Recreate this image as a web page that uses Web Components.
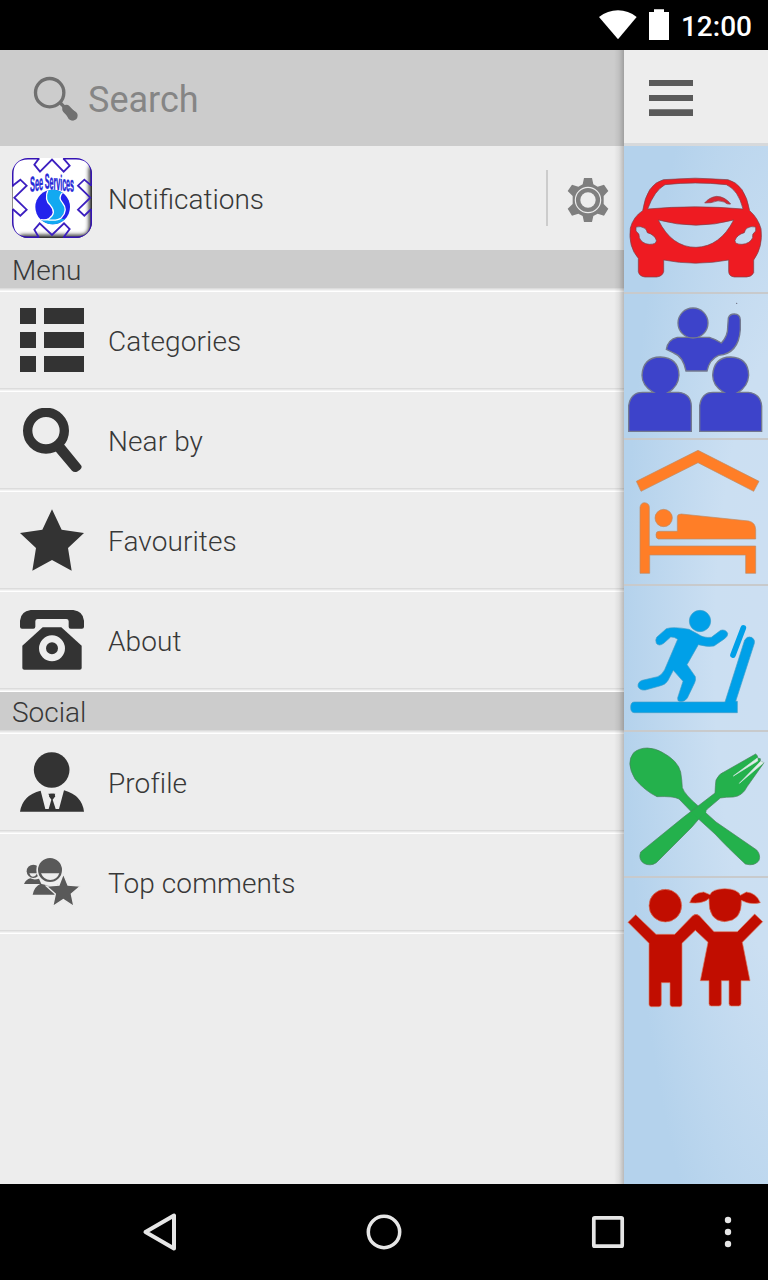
<!DOCTYPE html>
<html lang="en">
<head>
<meta charset="utf-8">
<title>See Services</title>
<style>
    html, body{
        margin: 0;
        background: #000;
    }
    body{
        width: 768px;
        height: 1280px;
        overflow: hidden;
        font-family: Roboto, sans-serif;
    }
</style>
</head>
<body>
<app-screen></app-screen>

<script>
const ICONS = {
    wifi: ['204 27 120 96', 40, 32, `<path fill="#fff" d="M207 51Q233 31 264 31T320 51L264 118Z"/>`],
    battery: ['357 27 60 96', 20, 32, `<path fill="#fff" d="M357 36H372V28H402V36H417V120H357Z"/>`],
    search: ['90 72 150 150', 50, 50, `
        <circle cx="149" cy="125" r="42.500" fill="none" stroke="#707070" stroke-width="10"/>
        <path d="M178 153L198 173" stroke="#707070" stroke-width="10"/>
        <path d="M199 174L220 196" stroke="#707070" stroke-width="25" stroke-linecap="round"/>
        <path d="M187 169L196 162L228 183Q236 190 230 198L222 207Q213 211 206 204Z" fill="#707070"/>`],
    gear: ['108 534 132 132', 44, 44, `
        <path fill="#7f7f7f" d="M162 534H186L190 553L203 560L222 554L235 573L221 588V612L235 626L222 647L203 641L190 648L186 666H162L158 648L145 641L126 647L113 626L128 612V588L113 573L126 554L145 560L158 553Z"/>
        <circle cx="174" cy="600" r="38" fill="#7f7f7f" stroke="#ededed" stroke-width="3.500"/>
        <circle cx="174" cy="600" r="23" fill="#ededed"/>`],
    burger: ['357 240 132 108', 44, 36, `<path fill="#5a5a5a" d="M357 240H489V258H357ZM357 285H489V303H357ZM357 328H489V348H357Z"/>`],
    logo: ['36 324 240 240', 80, 80, `
        <defs>
            <clipPath id="r"><rect x="36" y="324" width="240" height="240" rx="48"/></clipPath>
            <clipPath id="b"><circle cx="158" cy="471" r="52"/></clipPath>
            <filter id="s" x="-50%" y="-20%" width="200%" height="140%" filterUnits="objectBoundingBox"><feGaussianBlur stdDeviation="7"/></filter>
        </defs>
        <g clip-path="url(#r)">
            <rect x="36" y="324" width="240" height="240" fill="#fff"/>
            <path d="M280 350V530Q280 568 240 568H60" fill="none" stroke="#111" stroke-width="24" filter="url(#s)"/>
            <path d="M32 340V550H36V340" stroke="#333" stroke-width="8" filter="url(#s)"/>
            <g fill="none" stroke="#3c1fc0" stroke-width="5.500">
                <path d="M117 325L103 344L120 365L156 329L191 365L209 347L190 325"/>
                <path d="M117 563L103 539L119 520L156 555L192 520L209 537L190 563"/>
                <path d="M38 407L61 389L80 407L43 443L80 479L61 497L38 477"/>
                <path d="M274 407L253 389L234 407L271 443L234 479L253 497L274 477"/>
                <path stroke="#3514b4" stroke-width="7" d="M37 410V372Q37 325 84 325H118M190 325H228Q275 325 275 372V408M275 478V516Q275 563 228 563H190M117 563H84Q37 563 37 516V477"/>
            </g>
        </g>
        <circle cx="158" cy="471" r="52" fill="#2323ec"/>
        <g clip-path="url(#b)">
            <path d="M146 415Q132 450 151 466Q171 490 147 506Q133 514 112 506V530H210V502Q190 511 180 504Q205 480 191 462Q174 445 188 427L180 410Z" fill="#12a9f1"/>
            <path d="M144 419Q132 449 151 466Q171 489 147 506Q133 514 109 505M188 427Q173 443 187 458Q206 481 184 503Q172 514 138 509" fill="none" stroke="#fff" stroke-width="4"/>
        </g>
        <g font-family="Liberation Sans, sans-serif" font-weight="700" fill="#2528d8" stroke="#2528d8" stroke-width="1.500">
            <text transform="matrix(.345 -.05 0 1 90 425)" font-size="64">See</text>
            <text transform="matrix(.335 .04 0 1 134 415)" font-size="64">Services</text>
        </g>`],
    list: ['60 36 192 192', 64, 64, `<path d="M60 36H108V84H60ZM132 36H252V84H132ZM60 108H108V156H60ZM132 108H252V156H132ZM60 180H108V228H60ZM132 180H252V228H132Z"/>`],
    lens: ['60 336 192 192', 64, 64, `
        <circle cx="138" cy="404" r="55" fill="none" stroke="#333" stroke-width="28"/>
        <path d="M166 465L191 444L243 508Q248 514 240 521L231 527Q222 530 216 524Z"/>`],
    star: ['60 36 192 192', 64, 64, `<path d="M156 40L185 101L252 111L204 156L215 224L156 192L97 224L108 156L60 111L127 101Z"/>`],
    phone: ['60 336 192 192', 64, 64, `
        <path d="M60 392V374Q62 346 92 342H220Q250 346 252 374V392Q252 398 246 398H212Q206 398 206 392V376Q206 369 199 369H113Q106 369 106 376V392Q106 398 100 398H66Q60 398 60 392Z"/>
        <path d="M128 394H184L245 449V516Q245 521 239 521H73Q67 521 67 516V449Z"/>
        <circle cx="156" cy="457" r="28.500" fill="#333" stroke="#ededed" stroke-width="21"/>`],
    profile: ['60 180 192 192', 64, 64, `
        <circle cx="155" cy="240" r="53.500"/>
        <path d="M60 365Q68 315 122 302L136 357H146L154 329L147 319L151 311H162L166 319L158 329L167 357H177L192 301Q246 316 252 365Z"/>
        <path d="M145 311H166L160 323H151Z"/>`],
    top: ['60 480 192 192', 64, 64, `
        <g fill="#595959">
            <circle cx="100" cy="544" r="20"/>
            <path d="M88 550H112Q106 561 98 560Q91 559 88 550Z" fill="#ededed"/>
            <path d="M72 582Q78 568 91 565Q103 571 117 566L124 582Z"/>
            <path d="M98 614Q103 589 122 581Q148 590 174 584V614Z"/>
            <circle cx="150" cy="540" r="38.500" stroke="#ededed" stroke-width="5"/>
            <path d="M123 550H178Q171 570 151 570Q131 570 123 550Z" fill="#ededed"/>
            <path d="M190 551L204 585L242 588L214 612L222 650L190 629L158 650L166 612L139 588L177 585Z" stroke="#ededed" stroke-width="4"/>
        </g>`],
    back: ['140 1208 40 48', 40, 48, `<path d="M145.500 1232L174 1215.500V1248.500Z" fill="none" stroke="#e6e6e6" stroke-width="4" stroke-linejoin="round"/>`],
    home: ['360 1208 48 48', 48, 48, `<circle cx="384" cy="1232" r="15.700" fill="none" stroke="#e6e6e6" stroke-width="3.500"/>`],
    recent: ['584 1208 48 48', 48, 48, `<rect x="593.800" y="1217.800" width="28.400" height="28.400" rx="1" fill="none" stroke="#e6e6e6" stroke-width="3.700"/>`],
    more: ['722 1208 12 48', 12, 48, `<g fill="#e6e6e6"><circle cx="728" cy="1220" r="3.200"/><circle cx="728" cy="1232" r="3.200"/><circle cx="728" cy="1244" r="3.200"/></g>`],
    car: ['282 438 432 438', 144, 146, `
        <path fill="#ee1b22" fill-rule="evenodd" stroke="#7a4048" stroke-width="2" d="M338 632Q350 552 400 539Q495 530 594 539Q645 552 659 632Q684 654 693 686Q700 740 671 780V818Q666 830 650 831H613Q597 829 596 815V780Q495 799 401 780V815Q397 829 380 831H345Q328 829 325 815V775Q294 740 301 684Q310 650 338 632Z
        M353 627Q495 614 639 627Q625 570 589 554Q495 544 405 554Q373 572 353 627Z
        M385 660Q425 742 498 742Q570 740 611 660Q498 691 385 660Z
        M318 681Q331 677 345 685Q351 692 352 698Q374 704 379 721Q380 733 358 733Q335 731 328 713Q330 702 318 693Z
        M677 681Q663 677 650 685Q644 692 643 698Q621 704 615 721Q614 733 636 733Q660 731 668 713Q665 702 677 693Z"/>
        <path d="M524 609Q537 592 560 589Q585 590 602 612Q590 614 583 606Q565 598 543 608Z" fill="#d82732" stroke="#884650" stroke-width="2"/>`],
    people: ['42 24 432 432', 144, 144, `
        <g fill="#3d43ca" stroke="#73798f" stroke-width="4">
            <path d="M169 190Q174 160 202 154H298Q318 160 334 171Q354 150 353 124L355 96Q359 84 373 84Q390 84 391 102V130Q386 203 326 208Q298 220 291 255H228Q219 211 191 201Z"/>
            <circle cx="249" cy="111" r="45"/>
            <path d="M56 436V359Q62 319 98 319H130Q96 300 96 268Q99 214 151 213Q206 215 207 268Q205 302 175 319H206Q243 323 244 360V436Z"/>
            <path d="M269 436V359Q275 319 309 319H341Q308 300 308 268Q311 214 362 213Q415 215 416 268Q414 302 384 319H415Q452 323 455 360V436Z"/>
        </g>
        <circle cx="380" cy="52" r="2" fill="#667"/>`],
    bed: ['42 12 432 432', 144, 144, `
        <g fill="#ff7e27" stroke="#b98c6a" stroke-width="2">
            <path d="M79 136L264 43L447 136L431 166L264 80L93 166Z"/>
            <path d="M90 412V214Q92 200 104 200Q118 202 118 214V330H437V412H407V357H119V412Z"/>
            <circle cx="161" cy="246" r="26"/>
            <path d="M145 309Q137 307 138 296Q138 286 147 286H202V242Q202 234 214 234L416 255Q437 260 437 281V309Z"/>
        </g>`],
    gym: ['42 6 432 432', 144, 144, `
        <g fill="#00a0e8" stroke="#3f9fc8" stroke-width="2">
            <path d="M73 354H345L404 168Q412 155 425 160Q436 167 433 178L377 352H382V386H73Q62 386 62 370Q62 354 73 354Z"/>
            <circle cx="270" cy="111" r="32"/>
            <path d="M140 160L169 134Q190 127 237 136L265 151Q278 162 304 160L332 139Q346 135 353 148Q354 157 344 164L312 186Q293 190 265 182L231 242L256 278Q258 288 254 296L232 342Q220 358 204 350Q201 342 206 332L219 292L190 259L173 291Q165 303 149 306L106 318Q89 320 84 307Q83 294 97 289L143 278Q155 274 164 257L203 166Q193 158 182 159L161 178Q147 188 139 178Q135 168 140 160Z"/>
            <path d="M400 132L369 213" fill="none" stroke="#00a0e8" stroke-width="17" stroke-linecap="round"/>
        </g>`],
    food: ['42 6 432 432', 144, 144, `
        <g fill="#24b14c" stroke="#4a805e" stroke-width="2">
            <path d="M71 68Q88 54 112 54Q136 55 155 66Q204 92 212 126Q216 150 217 173Q224 194 267 230L318 276L440 360Q453 374 447 391Q435 410 406 402Q350 350 315 312L260 262L207 207Q190 198 141 200Q105 183 75 147Q46 98 71 68Z"/>
            <path d="M437 72L442 77L443 84L451 86V94L462 98L412 169Q397 199 370 201Q348 201 331 204L292 237L246 291L139 398Q121 410 101 400Q84 387 92 366L220 262L315 189Q316 164 318 150Q328 130 342 126Z"/>
            <path d="M266 229L290 245L266 267L244 247Z" stroke="none"/>
        </g>
        <path d="M442 84L370 138L443 93ZM452 94L388 160L461 98Z" fill="#e3eee9" stroke="#d4e5e7" stroke-width="2"/>`],
    kids: ['42 12 432 432', 144, 144, `
        <g fill="#c10d00" stroke="#d9795f" stroke-width="2">
            <circle cx="166" cy="95" r="49"/>
            <path d="M54 145L77 122L138 181H194L248 125Q258 117 268 125L312 173H382L434 120L458 143L397 205L420 320H393V389Q393 396 386 396H364Q357 396 357 389V320H334V389Q334 396 327 396H304Q297 396 297 389V320H271L294 205L256 169L216 208V391Q216 398 209 398H187Q180 398 180 391V326H154V391Q154 398 147 398H124Q117 398 117 391V208Z"/>
            <path d="M239 86Q248 56 281 54L300 62Q306 45 344 44Q382 44 391 64L409 54Q439 57 451 86Q421 94 394 79Q397 141 344 143Q294 141 297 74Q276 91 239 86Z"/>
        </g>`]
};

class AppIcon extends HTMLElement {
    constructor(){
        super();
        this.attachShadow({mode: "open"});
    }

    connectedCallback(){
        const [box, width, height, shapes] = ICONS[this.getAttribute('name')];
        this.shadowRoot.innerHTML = `
        <style>
            :host{
                display: block;
                flex: none;
            }
            svg{
                display: block;
                fill: #333;
            }
        </style>
        <svg viewBox="${box}" width="${width}" height="${height}">${shapes}</svg>
        `;
    }
}
customElements.define('app-icon', AppIcon);

class StatusBar extends HTMLElement {
    constructor(){
        super();
        this.attachShadow({mode: "open"}).innerHTML = `
        <style>
            :host{
                display: flex;
                justify-content: flex-end;
                box-sizing: border-box;
                height: 50px;
                padding: 9px 16px 0 0;
                background: #000;
                color: #fff;
                font-size: 28px;
                font-weight: 500;
                line-height: 36px;
            }
            .battery{
                margin: 0 12px 0 11px;
            }
        </style>
        <app-icon name="wifi"></app-icon>
        <app-icon name="battery" class="battery"></app-icon>
        <slot></slot>
        `;
    }
}
customElements.define('status-bar', StatusBar);

class SearchBox extends HTMLElement {
    constructor(){
        super();
        this.attachShadow({mode: "open"}).innerHTML = `
        <style>
            :host{
                display: flex;
                align-items: center;
                box-sizing: border-box;
                height: 96px;
                padding: 3px 0 0 30px;
                gap: 8px;
                background: #ccc;
                color: #858585;
                font-size: 36px;
                line-height: 42px;
                letter-spacing: 0;
            }
        </style>
        <app-icon name="search"></app-icon>
        <slot></slot>
        `;
    }
}
customElements.define('search-box', SearchBox);

class NoticeRow extends HTMLElement {
    constructor(){
        super();
        this.attachShadow({mode: "open"}).innerHTML = `
        <style>
            :host{
                display: flex;
                align-items: center;
                box-sizing: border-box;
                height: 104px;
                padding: 0 14px 0 12px;
                letter-spacing: 0;
            }
            .label{
                flex: 1;
                padding: 4px 0 0 16px;
            }
            .line{
                width: 2px;
                height: 56px;
                margin-right: 18px;
                background: #ccc;
            }
            .gear{
                margin-top: 4px;
            }
        </style>
        <app-icon name="logo"></app-icon>
        <span class="label"><slot></slot></span>
        <span class="line"></span>
        <app-icon name="gear" class="gear"></app-icon>
        `;
    }
}
customElements.define('notice-row', NoticeRow);

const divider = `
            :host::after{
                content: "";
                display: block;
                height: 4px;
                background: linear-gradient(#dcdcdc 0 1px, #e8e8e8 1px 2px, #f3f3f3 2px 3px, #fff 3px);
            }`;

class MenuHeader extends HTMLElement {
    constructor(){
        super();
        this.attachShadow({mode: "open"}).innerHTML = `
        <style>
            :host{
                display: block;
                letter-spacing: 0;
            }
            ${divider}
            div{
                height: 38px;
                padding-left: 12px;
                line-height: 41px;
                background: #ccc;
            }
        </style>
        <div><slot></slot></div>
        `;
    }
}
customElements.define('menu-header', MenuHeader);

class MenuItem extends HTMLElement {
    constructor(){
        super();
        this.attachShadow({mode: "open"});
    }

    connectedCallback(){
        this.shadowRoot.innerHTML = `
        <style>
            :host{
                display: block;
            }
            ${divider}
            div{
                display: flex;
                align-items: center;
                height: 96px;
                padding-left: 20px;
                gap: 24px;
            }
            span{
                padding-top: 4px;
            }
        </style>
        <div>
            <app-icon name="${this.getAttribute('icon')}"></app-icon>
            <span><slot></slot></span>
        </div>
        `;
    }
}
customElements.define('menu-item', MenuItem);

class SideDrawer extends HTMLElement {
    constructor(){
        super();
        this.attachShadow({mode: "open"}).innerHTML = `
        <style>
            :host{
                display: block;
                position: relative;
                width: 624px;
                background: #ededed;
                color: #383838;
                font-size: 28px;
                font-weight: 300;
                line-height: 34px;
                letter-spacing: .1px;
            }
            .shade{
                position: absolute;
                top: 0;
                right: 0;
                bottom: 0;
                width: 10px;
                background: linear-gradient(to right, rgba(0,0,0,0), rgba(0,0,0,.06) 50%, rgba(0,0,0,.22));
            }
        </style>
        <slot></slot>
        <div class="shade"></div>
        `;
    }
}
customElements.define('side-drawer', SideDrawer);

class CategoryStrip extends HTMLElement {
    constructor(){
        super();
        this.attachShadow({mode: "open"}).innerHTML = `
        <style>
            :host{
                display: flex;
                flex-direction: column;
                width: 144px;
            }
            header{
                box-sizing: border-box;
                height: 96px;
                padding: 30px 0 0 25px;
                border-bottom: 3px solid #d7d9db;
                background: #ededed;
            }
            section{
                flex: 1;
                background: radial-gradient(ellipse 165px 700px at 165px 510px, #cddff2 0, #cbdff2 45%, #b4d2ec 100%);
            }
            ::slotted(app-icon){
                border-bottom: 2px solid #c8cacc;
            }
            ::slotted(app-icon:last-child){
                border: 0;
            }
        </style>
        <header><app-icon name="burger"></app-icon></header>
        <section><slot></slot></section>
        `;
    }
}
customElements.define('category-strip', CategoryStrip);

class NavBar extends HTMLElement {
    constructor(){
        super();
        this.attachShadow({mode: "open"}).innerHTML = `
        <style>
            :host{
                display: flex;
                align-items: center;
                box-sizing: border-box;
                height: 96px;
                padding: 0 34px 0 140px;
                background: #000;
            }
            .home{
                margin: 0 176px 0 180px;
            }
            .more{
                margin-left: auto;
            }
        </style>
        <app-icon name="back"></app-icon>
        <app-icon name="home" class="home"></app-icon>
        <app-icon name="recent"></app-icon>
        <app-icon name="more" class="more"></app-icon>
        `;
    }
}
customElements.define('nav-bar', NavBar);

class AppScreen extends HTMLElement {
    constructor(){
        super();
        this.attachShadow({mode: "open"}).innerHTML = `
        <style>
            :host{
                display: flex;
                flex-direction: column;
                width: 768px;
                height: 1280px;
            }
            main{
                display: flex;
                flex: 1;
            }
            search-box{
                font-weight: 400;
            }
        </style>
        <status-bar>12:00</status-bar>
        <main>
            <side-drawer>
                <search-box>Search</search-box>
                <notice-row>Notifications</notice-row>
                <menu-header>Menu</menu-header>
                <menu-item icon="list">Categories</menu-item>
                <menu-item icon="lens">Near by</menu-item>
                <menu-item icon="star">Favourites</menu-item>
                <menu-item icon="phone">About</menu-item>
                <menu-header>Social</menu-header>
                <menu-item icon="profile">Profile</menu-item>
                <menu-item icon="top">Top comments</menu-item>
            </side-drawer>
            <category-strip>
                <app-icon name="car"></app-icon>
                <app-icon name="people"></app-icon>
                <app-icon name="bed"></app-icon>
                <app-icon name="gym"></app-icon>
                <app-icon name="food"></app-icon>
                <app-icon name="kids"></app-icon>
            </category-strip>
        </main>
        <nav-bar></nav-bar>
        `;
    }
}
customElements.define('app-screen', AppScreen);
</script>
</body>
</html>
